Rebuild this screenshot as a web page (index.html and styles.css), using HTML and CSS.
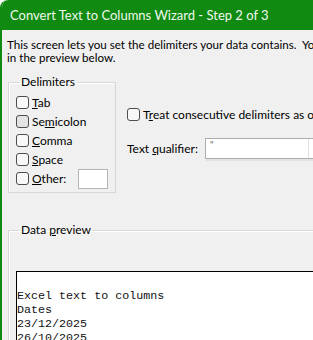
FILE: index.html
```html
<!DOCTYPE html>
<html lang="en">
<head>
    <meta charset="UTF-8">
    <meta name="viewport" content="width=device-width, initial-scale=1.0">
    <title>Convert Text to Columns Wizard - Step 2 of 3</title>
    <link rel="stylesheet" href="styles.css">
</head>
<body>
    <div class="window">
        <div class="titlebar">Convert Text to Columns Wizard - Step 2 of 3</div>

        <div class="content">
            <p class="desc">This screen lets you set the delimiters your data contains.&nbsp; You can see how your text is affected<br>in the preview below.</p>

            <div class="options">
                <fieldset class="group delimiters">
                    <legend>Delimiters</legend>
                    <label class="check"><span class="box"></span><span><u>T</u>ab</span></label>
                    <label class="check"><span class="box hover"></span><span>Se<u>m</u>icolon</span></label>
                    <label class="check"><span class="box"></span><span><u>C</u>omma</span></label>
                    <label class="check"><span class="box"></span><span><u>S</u>pace</span></label>
                    <label class="check"><span class="box"></span><span class="other-label"><u>O</u>ther:</span><span class="other-input"></span></label>
                </fieldset>

                <div class="side">
                    <label class="check treat"><span class="box"></span><span>T<u>r</u>eat consecutive delimiters as one</span></label>
                    <div class="qualifier">
                        <span class="qualifier-label">Text <u>q</u>ualifier:</span>
                        <div class="select">
                            <span class="select-value">"</span>
                            <span class="select-arrow">
                                <svg width="8" height="5" viewBox="0 0 8 5"><path d="M0.5 0.5 L4 4 L7.5 0.5" fill="none" stroke="#666" stroke-width="1"/></svg>
                            </span>
                        </div>
                    </div>
                </div>
            </div>

            <fieldset class="group preview-group">
                <legend>Data <u>p</u>review</legend>
                <div class="preview">
                    <pre>Excel text to columns
Dates
23/12/2025
26/10/2025</pre>
                </div>
            </fieldset>
        </div>
    </div>
</body>
</html>
```

FILE: styles.css
```css
html, body {
    margin: 0;
    padding: 0;
    background-color: #fff;
    overflow: hidden;
}

body {
    font-family: Lato, 'Noto Sans', sans-serif;
    font-size: 12px;
    color: #000;
}

.window {
    width: 640px;
    height: 340px;
    overflow: hidden;
    border-left: 2px solid #118a11;
    border-top-left-radius: 8px;
    background-color: #f0f0f0;
    display: flex;
    flex-direction: column;
}

.titlebar {
    height: 30px;
    line-height: 30px;
    background-color: #118a11;
    color: #eef8ee;
    font-size: 13px;
    padding-left: 8px;
    border-top-left-radius: 6px;
    white-space: nowrap;
    flex-shrink: 0;
}

.content {
    flex: 1;
    padding-left: 6px;
}

.desc {
    margin: 0;
    padding: 8px 0 0 0;
    margin-left: -1px;
    font-size: 11.6px;
    line-height: 13px;
    white-space: nowrap;
}

.options {
    display: flex;
    align-items: flex-start;
    margin-top: 10px;
}

.group {
    margin: 0;
    border: 1px solid #d6d6d6;
    box-shadow: inset 1px 1px 0 #fff;
}

.group legend {
    padding: 0 2px;
    margin-left: 3px;
    line-height: 16px;
}

.delimiters {
    width: 92px;
    padding: 3px 7px 4px 7px;
}

.check {
    display: flex;
    align-items: center;
    gap: 3px;
    height: 19px;
    white-space: nowrap;
}

.box {
    width: 11px;
    height: 11px;
    border: 1px solid #4d4d4d;
    border-radius: 3px;
    background-color: #f8f8f8;
    flex-shrink: 0;
}

.box.hover {
    background-color: #e3e3e3;
}

.other-label {
    width: 43px;
}

.other-input {
    width: 28px;
    height: 18px;
    border: 1px solid #b4b4b4;
    background-color: #fff;
}

.side {
    margin-left: 11px;
    display: flex;
    flex-direction: column;
}

.treat {
    margin-top: 30px;
    height: 20px;
}

.qualifier {
    display: flex;
    align-items: center;
    margin-top: 14px;
}

.qualifier-label {
    width: 78px;
    white-space: nowrap;
}

.select {
    width: 118px;
    height: 19px;
    border: 1px solid #adadad;
    background-color: #fff;
    display: flex;
    align-items: stretch;
    box-shadow: 0 3px 0 -1px #e2e2e2;
}

.select-value {
    flex: 1;
    padding-left: 4px;
    font-size: 9px;
    line-height: 12px;
    color: #555;
}

.select-arrow {
    width: 15px;
    border-left: 1px solid #e0e0e0;
    display: flex;
    align-items: center;
    justify-content: center;
}

.preview-group {
    margin-top: 29px;
    padding: 33px 0 0 7px;
    border-right: none;
    border-bottom: none;
    height: 200px;
}

.preview {
    border: 1px solid #000;
    border-right: none;
    background-color: #fff;
    height: 200px;
    padding: 17px 0 0 0;
}

.preview pre {
    margin: 0;
    font-family: 'Liberation Mono', 'Courier New', monospace;
    font-size: 11.7px;
    line-height: 14px;
    color: #111;
}
```
